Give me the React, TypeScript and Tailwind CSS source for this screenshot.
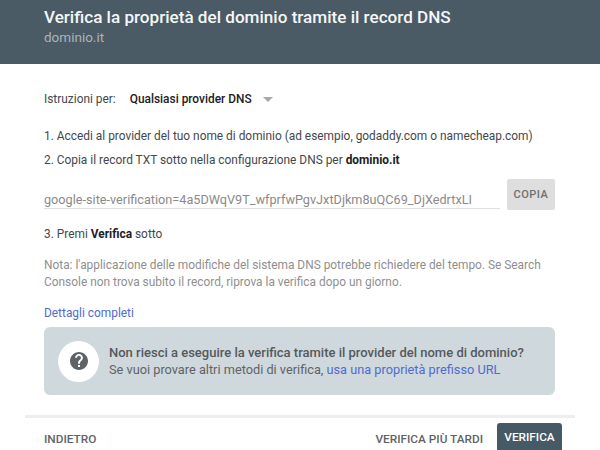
import React from 'react';

const App: React.FC = () => {
  return (
    <div className="w-[600px] h-[450px] overflow-hidden bg-white flex flex-col text-[#44484b] font-['Roboto',sans-serif]">
      {/* Header */}
      <div className="h-[64px] shrink-0 bg-[#4b5b66] pl-[44px] pt-[6px]">
        <h1 className="text-[17.1px] leading-[22px] font-medium text-[#f5f7f8] whitespace-nowrap">
          Verifica la proprietà del dominio tramite il record DNS
        </h1>
        <p className="mt-[-1px] text-[13.5px] leading-[20px] text-[#a9b3ba]">dominio.it</p>
      </div>

      {/* Body */}
      <div className="flex-1 pl-[44px] pr-[45px] pt-[26px] text-[11.9px] leading-[18px]">
        <div className="flex items-center h-[18px]">
          <span>Istruzioni per:</span>
          <span className="ml-[14px] font-medium text-[#202124]">Qualsiasi provider DNS</span>
          <span className="ml-[11px] mt-[1px] w-0 h-0 border-x-[5px] border-x-transparent border-t-[5px] border-t-[#a8a8a8]" />
        </div>

        <p className="mt-[19px] whitespace-nowrap">1. Accedi al provider del tuo nome di dominio (ad esempio, godaddy.com o namecheap.com)</p>
        <p className="mt-[6px]">
          2. Copia il record TXT sotto nella configurazione DNS per <b className="font-bold text-[#202124]">dominio.it</b>
        </p>

        <div className="mt-[10px] flex items-start">
          <div className="w-[456px] h-[30px] pt-[13px] border-b border-[#e0e0e0] text-[12.7px] leading-[16px] text-[#8a8a8a] whitespace-nowrap">
            google-site-verification=4a5DWqV9T_wfprfwPgvJxtDjkm8uQC69_DjXedrtxLI
          </div>
          <button className="ml-[7px] w-[48px] h-[31px] rounded-[2px] bg-[#dedede] text-[11px] font-medium tracking-[0.5px] text-[#6f6f6f]">
            COPIA
          </button>
        </div>

        <p className="mt-[15px]">
          3. Premi <b className="font-bold text-[#202124]">Verifica</b> sotto
        </p>

        <p className="mt-[14px] text-[11.9px] leading-[17px] text-[#8f8f8f]">
          Nota: l'applicazione delle modifiche del sistema DNS potrebbe richiedere del tempo. Se Search Console non trova subito il record, riprova la verifica dopo un giorno.
        </p>

        <a className="block mt-[13px] text-[#4f6bd0]">Dettagli completi</a>

        <div className="mt-[5px] h-[68px] rounded-[6px] bg-[#cfd8dc] flex items-center pl-[14px]">
          <div className="w-[41px] h-[41px] rounded-full bg-white flex items-center justify-center">
            <svg width="18" height="18" viewBox="0 0 24 24">
              <path
                fill="#5f6368"
                d="M12 0C5.4 0 0 5.4 0 12s5.400 12 12 12 12-5.400 12-12S18.600 0 12 0zm1.300 20h-2.600v-2.600h2.600V20zm2.700-9.300l-1.200 1.200c-1 1-1.500 1.900-1.500 3.600h-2.600v-.7c0-1.400.6-2.700 1.500-3.700l1.600-1.600c.5-.5.8-1.100.8-1.800 0-1.500-1.200-2.600-2.600-2.600S9.400 6.200 9.400 7.700H6.800c0-2.900 2.300-5.200 5.200-5.200s5.200 2.300 5.200 5.200c0 1.100-.4 2.200-1.200 3z"
              />
            </svg>
          </div>
          <div className="ml-[10px] leading-[17px]">
            <p className="text-[13px] font-medium text-[#55595c] whitespace-nowrap">Non riesci a eseguire la verifica tramite il provider del nome di dominio?</p>
            <p className="text-[12.75px] text-[#5f6368] whitespace-nowrap">
              Se vuoi provare altri metodi di verifica, <a className="text-[#4f6bd0]">usa una proprietà prefisso URL</a>
            </p>
          </div>
        </div>
      </div>

      {/* Footer */}
      <div className="mx-[25px] h-[35px] shrink-0 border-t-[3px] border-[#eeeeee] pl-[19px] pr-[13px] flex items-start justify-between text-[11.8px] font-medium text-[#5f6368]">
        <span className="mt-[12px] leading-[18px]">INDIETRO</span>
        <div className="flex items-start">
          <span className="mt-[12px] leading-[18px]">VERIFICA PIÙ TARDI</span>
          <button className="ml-[14px] mt-[5px] w-[65px] h-[30px] rounded-t-[3px] bg-[#455a64] text-white font-medium">
            VERIFICA
          </button>
        </div>
      </div>
    </div>
  );
};

export default App;
